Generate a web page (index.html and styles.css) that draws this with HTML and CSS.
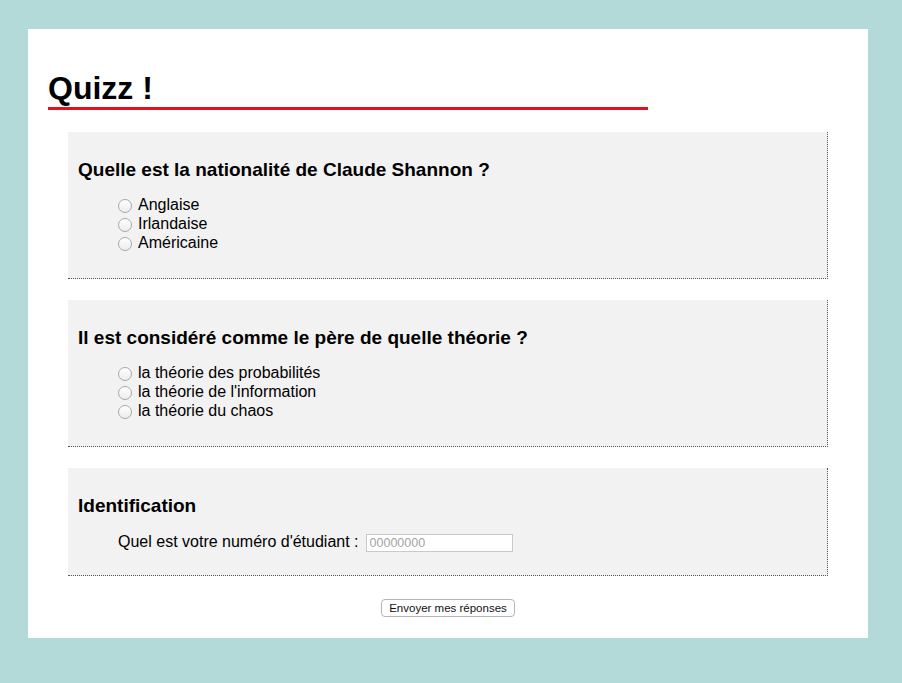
FILE: index.html
```html
<!DOCTYPE html>
<html lang="fr">
<head>
<meta charset="utf-8">
<title>Quizz</title>
<link rel="stylesheet" href="styles.css">
</head>
<body>
<div class="page">
  <h1 class="title">Quizz !</h1>
  <form class="quiz">
    <div class="question">
      <h3 class="q-title">Quelle est la nationalité de Claude Shannon ?</h3>
      <div class="options">
        <label class="option"><input type="radio" name="q1" class="radio">Anglaise</label>
        <label class="option"><input type="radio" name="q1" class="radio">Irlandaise</label>
        <label class="option"><input type="radio" name="q1" class="radio">Américaine</label>
      </div>
    </div>
    <div class="question">
      <h3 class="q-title">Il est considéré comme le père de quelle théorie ?</h3>
      <div class="options">
        <label class="option"><input type="radio" name="q2" class="radio">la théorie des probabilités</label>
        <label class="option"><input type="radio" name="q2" class="radio">la théorie de l'information</label>
        <label class="option"><input type="radio" name="q2" class="radio">la théorie du chaos</label>
      </div>
    </div>
    <div class="question">
      <h3 class="q-title">Identification</h3>
      <div class="ident-row">
        <label class="ident-label" for="num">Quel est votre numéro d'étudiant :</label>
        <input type="text" id="num" class="ident-input" placeholder="00000000">
      </div>
    </div>
    <div class="submit-row">
      <button type="button" class="submit">Envoyer mes réponses</button>
    </div>
  </form>
</div>
</body>
</html>
```

FILE: styles.css
```css
html, body {
  margin: 0;
  padding: 0;
}

body {
  background: #b3d9d9;
  font-family: "Liberation Sans", Arial, Helvetica, sans-serif;
  color: #000;
  padding: 29px 0 0 28px;
}

.page {
  box-sizing: border-box;
  width: 840px;
  height: 609px;
  background: #fff;
  padding: 20px;
  overflow: hidden;
}

.title {
  width: 600px;
  font-size: 32px;
  font-weight: bold;
  margin: 21.44px 0;
  padding: 0;
  border-bottom: 3px solid #e2111c;
}

.quiz {
  margin: 0 20px;
}

.question {
  background: #f2f2f2;
  border-right: 1px dotted #555;
  border-bottom: 1px dotted #555;
  padding: 8px 10px 10px;
  margin-bottom: 21px;
}

.q-title {
  font-size: 19px;
  line-height: 21px;
  font-weight: bold;
  margin: 19px 0 15px;
}

.options {
  padding-left: 40px;
  margin-bottom: 16px;
  font-size: 16px;
}

.option {
  display: block;
  line-height: 19px;
}

.radio {
  -webkit-appearance: none;
  appearance: none;
  box-sizing: border-box;
  width: 14px;
  height: 14px;
  margin: 0 6px 0 0;
  border: 1px solid #a9a9a9;
  border-radius: 50%;
  background: linear-gradient(#ffffff, #ececec);
  vertical-align: -3px;
}

.ident-row {
  display: flex;
  align-items: center;
  height: 22px;
  padding-left: 40px;
  margin-bottom: 12px;
  font-size: 16px;
}

.ident-label {
  margin-right: 7px;
}

.ident-input {
  box-sizing: border-box;
  width: 147px;
  height: 18px;
  margin: 2px 0 0 0;
  padding: 0 3px;
  border: 1px solid #c9c9c9;
  background: #fff;
  font-family: "Liberation Sans", Arial, sans-serif;
  font-size: 12.5px;
}

.ident-input::placeholder {
  color: #a3a3a3;
}

.submit-row {
  text-align: center;
  margin-top: 22px;
}

.submit {
  box-sizing: border-box;
  height: 18px;
  padding: 0 7px;
  border: 1px solid #b5b5b5;
  border-radius: 4px;
  background: #fff;
  font-family: "Liberation Sans", Arial, sans-serif;
  font-size: 11.5px;
  color: #111;
  line-height: 16px;
}
```
